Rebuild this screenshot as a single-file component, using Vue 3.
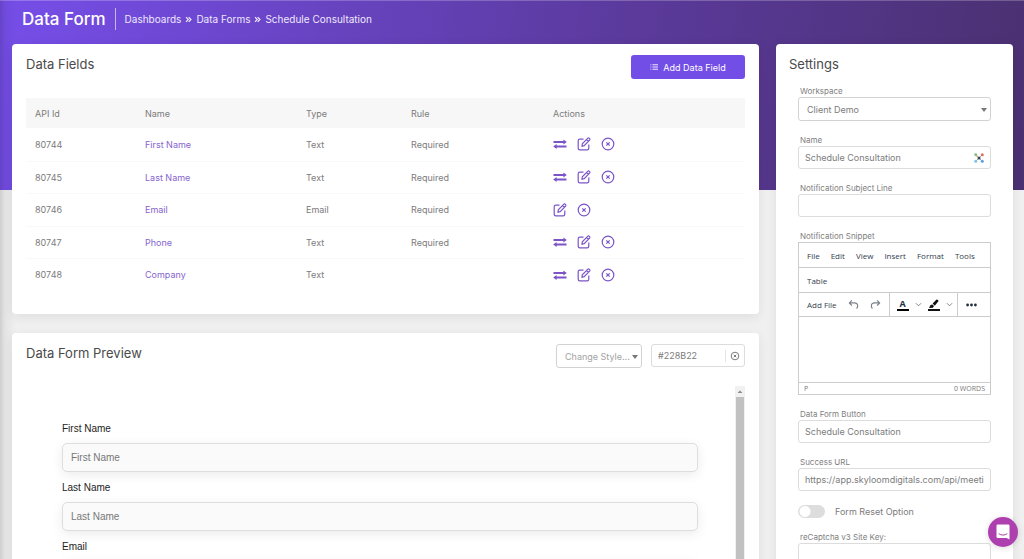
<script setup>
import { ref } from 'vue'

const crumbs = ['Dashboards', 'Data Forms', 'Schedule Consultation']

const fields = [
  { id: 80744, name: 'First Name', type: 'Text', rule: 'Required', movable: true },
  { id: 80745, name: 'Last Name', type: 'Text', rule: 'Required', movable: true },
  { id: 80746, name: 'Email', type: 'Email', rule: 'Required', movable: false },
  { id: 80747, name: 'Phone', type: 'Text', rule: 'Required', movable: true },
  { id: 80748, name: 'Company', type: 'Text', rule: '', movable: true }
]

const previewFields = ['First Name', 'Last Name', 'Email']
const menus = ['File', 'Edit', 'View', 'Insert', 'Format', 'Tools']

const color = ref('#228B22')
const formName = ref('Schedule Consultation')
const subject = ref('')
const buttonText = ref('Schedule Consultation')
const successUrl = ref('https://app.skyloomdigitals.com/api/meetings')
const snippet = ref('')
const resetOption = ref(false)
const siteKey = ref('')
</script>

<template>
  <div class="page">
    <header class="top">
      <h1>Data Form</h1>
      <nav class="crumbs" aria-label="Breadcrumb">
        <template v-for="(c, i) in crumbs" :key="c">
          <svg v-if="i" class="sep" viewBox="0 0 8 8" aria-hidden="true">
            <path d="M1.2 1.2 3.8 4 1.2 6.8M4.2 1.2 6.8 4 4.2 6.8" />
          </svg>
          <a href="#">{{ c }}</a>
        </template>
      </nav>
    </header>

    <div class="columns">
      <main class="left">
        <section class="card fields-card">
          <div class="card-head">
            <h2>Data Fields</h2>
            <button class="add" type="button">
              <svg viewBox="0 0 9 8" aria-hidden="true">
                <path d="M0.5 1.5h1M0.5 4h1M0.5 6.5h1M2.8 1.5H9M2.8 4H9M2.8 6.5H9" />
              </svg>
              Add Data Field
            </button>
          </div>
          <table>
            <colgroup>
              <col class="c-id" /><col class="c-name" /><col class="c-type" /><col class="c-rule" /><col />
            </colgroup>
            <thead>
              <tr><th>API Id</th><th>Name</th><th>Type</th><th>Rule</th><th>Actions</th></tr>
            </thead>
            <tbody>
              <tr v-for="f in fields" :key="f.id">
                <td>{{ f.id }}</td>
                <td><a href="#">{{ f.name }}</a></td>
                <td>{{ f.type }}</td>
                <td>{{ f.rule }}</td>
                <td>
                  <div class="actions">
                    <button v-if="f.movable" type="button" aria-label="Move">
                      <svg viewBox="0 0 14 14">
                        <path class="thick" d="M.5 5H11M3 9.500H13.500" />
                        <path class="solid" d="M10.400 2.500 13.800 5 10.400 7.500zM3.600 7 .2 9.500 3.600 12z" />
                      </svg>
                    </button>
                    <button type="button" aria-label="Edit">
                      <svg viewBox="0 0 14 14">
                        <path d="M6.500 2.200H2.800Q1.200 2.200 1.200 3.800v7.400q0 1.600 1.600 1.600h7.400q1.600 0 1.600-1.600V7.600" />
                        <path d="M5 9.200 5.300 6.800 10.900 1.200Q11.600.6 12.400 1.400q.9.9.2 1.700L7.200 8.700zM9.600 2.600l1.800 1.800" />
                      </svg>
                    </button>
                    <button type="button" aria-label="Delete">
                      <svg viewBox="0 0 14 14">
                        <circle cx="7" cy="7" r="5.800" />
                        <path class="mid" d="M5.300 5.300l3.400 3.400M8.700 5.300 5.300 8.700" />
                      </svg>
                    </button>
                  </div>
                </td>
              </tr>
            </tbody>
          </table>
        </section>

        <section class="card preview-card">
          <div class="card-head">
            <h2>Data Form Preview</h2>
            <div class="tools">
              <div class="select style-select">
                <select aria-label="Change Style"><option>Change Style...</option></select>
              </div>
              <div class="color">
                <input v-model="color" type="text" aria-label="Color" />
                <button type="button" aria-label="Clear color">
                  <svg viewBox="0 0 10 10">
                    <circle cx="5" cy="5" r="3.800" />
                    <path d="M3.800 3.800l2.400 2.400M6.200 3.800 3.800 6.200" />
                  </svg>
                </button>
              </div>
            </div>
          </div>
          <div class="frame">
            <form class="preview" @submit.prevent>
              <div v-for="(p, i) in previewFields" :key="p" class="pfield">
                <label :for="'p' + i">{{ p }}</label>
                <input :id="'p' + i" type="text" :placeholder="p" />
              </div>
            </form>
            <div class="scroll" aria-hidden="true">
              <svg viewBox="0 0 10 11"><path d="M5 4.500 7.400 7H2.600z" /></svg>
              <div class="thumb"></div>
            </div>
          </div>
        </section>
      </main>

      <aside class="card settings">
        <h2>Settings</h2>
        <div class="form">
          <div class="field">
            <label for="ws">Workspace</label>
            <div class="select">
              <select id="ws"><option>Client Demo</option></select>
            </div>
          </div>
          <div class="field">
            <label for="nm">Name</label>
            <div class="box">
              <input id="nm" v-model="formName" type="text" />
              <svg class="burst" viewBox="0 0 10 10" aria-hidden="true">
                <path class="rays" d="M2 2l6 6M8 2 2 8" />
                <circle cx="1.700" cy="1.700" r="1.400" fill="#7fb98a" />
                <circle cx="8.300" cy="1.700" r="1.500" fill="#e2705c" />
                <circle cx="1.700" cy="8.300" r="1.500" fill="#7cc4e8" />
                <circle cx="8.300" cy="8.300" r="1.500" fill="#5e9fd8" />
                <circle cx="5" cy="5" r="1.500" fill="#35445c" />
                <circle cx="3.200" cy="3.400" r=".8" fill="#e6a84c" />
              </svg>
            </div>
          </div>
          <div class="field">
            <label for="sb">Notification Subject Line</label>
            <div class="box"><input id="sb" v-model="subject" type="text" /></div>
          </div>
          <div class="field">
            <label for="sn">Notification Snippet</label>
            <div class="editor">
              <div class="menu">
                <button v-for="m in menus" :key="m" type="button">{{ m }}</button>
              </div>
              <div class="menu"><button type="button">Table</button></div>
              <div class="toolbar">
                <div class="group files">
                  <button type="button">Add File</button>
                  <button type="button" aria-label="Undo">
                    <svg class="arrow" viewBox="0 0 12 12"><path d="M4.200 1.500 1.500 4.300 4.200 7.100M1.700 4.300h5.200q3.600 0 3.600 3.200 0 1.800-1.200 2.900" /></svg>
                  </button>
                  <button type="button" aria-label="Redo">
                    <svg class="arrow" viewBox="0 0 12 12"><path d="M7.800 1.500 10.500 4.300 7.800 7.100M10.300 4.300H5.100q-3.600 0-3.600 3.200 0 1.800 1.200 2.900" /></svg>
                  </button>
                </div>
                <div class="group colors">
                  <button type="button" class="letter" aria-label="Text color">A</button>
                  <button type="button" aria-label="Text colors">
                    <svg class="chev" viewBox="0 0 8 8"><path d="M1 2.500 4 5.500 7 2.500" /></svg>
                  </button>
                  <button type="button" aria-label="Highlight color">
                    <svg class="marker" viewBox="0 0 12 12">
                      <path d="M0 10h12v2H0zM1 9l1.500-3 2-.6L5.900 7 5 8.800zM4.600 4.600 8.300.8Q9 .2 9.900.9q1 .9.3 1.700L6.800 6.700z" />
                    </svg>
                  </button>
                  <button type="button" aria-label="Highlight colors">
                    <svg class="chev" viewBox="0 0 8 8"><path d="M1 2.500 4 5.500 7 2.500" /></svg>
                  </button>
                </div>
                <div class="group more">
                  <button type="button" aria-label="More">
                    <svg class="dots" viewBox="0 0 11 4"><circle cx="1.600" cy="2" r="1.400" /><circle cx="5.500" cy="2" r="1.400" /><circle cx="9.400" cy="2" r="1.400" /></svg>
                  </button>
                </div>
              </div>
              <textarea id="sn" v-model="snippet"></textarea>
              <div class="status"><span>P</span><span>0 WORDS</span></div>
            </div>
          </div>
          <div class="field">
            <label for="bt">Data Form Button</label>
            <div class="box"><input id="bt" v-model="buttonText" type="text" /></div>
          </div>
          <div class="field">
            <label for="su">Success URL</label>
            <div class="box"><input id="su" v-model="successUrl" type="text" /></div>
          </div>
          <label class="switch">
            <input v-model="resetOption" type="checkbox" />
            <span>Form Reset Option</span>
          </label>
          <div class="field">
            <label for="sk">reCaptcha v3 Site Key:</label>
            <div class="box"><input id="sk" v-model="siteKey" type="text" /></div>
          </div>
        </div>
      </aside>
    </div>

    <button class="chat" type="button" aria-label="Open chat">
      <svg viewBox="0 0 14 16">
        <path class="bubble" d="M1.800.5h10.400q1.300 0 1.300 1.300v13.700L10.600 14H1.800Q.5 14 .5 12.700V1.800Q.5.5 1.800.5z" />
        <path class="smile" d="M3 9.800q4 2.800 8 0" />
      </svg>
    </button>
  </div>
</template>

<style>
body {
  background: #f0f0f0;
}
</style>

<style scoped>
* {
  box-sizing: border-box;
}

.page {
  position: relative;
  height: 100vh;
  overflow: hidden;
  padding: 0 11px 0 12px;
  font-family: Inter, "Open Sans", sans-serif;
  font-size: 9px;
  color: #7c7c7c;
  background:
    linear-gradient(rgba(255, 255, 255, 0.22), rgba(255, 255, 255, 0.22)) 0 0 / 100% 1px no-repeat,
    linear-gradient(90deg, rgba(0, 0, 0, 0.14), rgba(0, 0, 0, 0.05) 5px, transparent 16px),
    linear-gradient(100deg, #764ee9 0%, #5b3a9c 60%, #4a3070 100%) 0 0 / 100% 190px no-repeat,
    #f0f0f0;
}

h1,
h2 {
  margin: 0;
  font-weight: 500;
}

button,
input,
select,
textarea {
  font: inherit;
  color: inherit;
  margin: 0;
  padding: 0;
  border: 0;
  background: none;
  outline: none;
}

button {
  cursor: pointer;
}

a {
  color: inherit;
  text-decoration: none;
}

svg {
  display: block;
  fill: none;
  stroke: currentColor;
}

.top {
  display: flex;
  align-items: center;
  height: 44px;
  padding: 0 10px 6px;
  color: #fff;
}

h1 {
  font-size: 17px;
  line-height: 22px;
  padding-right: 9px;
  border-right: 1px solid rgba(255, 255, 255, 0.6);
}

.crumbs {
  display: flex;
  align-items: center;
  gap: 4px;
  padding-left: 9px;
  font-size: 10px;
  color: #eee8fb;
}

.sep {
  width: 7px;
  height: 7px;
  stroke-width: 1.4;
}

.columns {
  display: flex;
  align-items: flex-start;
  gap: 17px;
}

.left {
  flex: 1;
  min-width: 0;
}

.card {
  background: #fff;
  border-radius: 4px;
  box-shadow: 0 3px 12px rgba(0, 0, 0, 0.08);
}

h2 {
  font-size: 13px;
  line-height: 18px;
  font-weight: 400;
  color: #4a4a4a;
}

.card-head {
  display: flex;
  justify-content: space-between;
  align-items: flex-start;
}

.fields-card {
  padding: 11px 14px 23px;
  margin-bottom: 19px;
}

.add {
  display: flex;
  align-items: center;
  justify-content: center;
  gap: 5px;
  width: 114px;
  height: 24px;
  border-radius: 3px;
  background: #734ee6;
  color: #fff;
}

.add svg {
  width: 8px;
  height: 8px;
}

table {
  width: 100%;
  margin-top: 19px;
  border-collapse: collapse;
  table-layout: fixed;
}

.c-id {
  width: 110px;
}

.c-name {
  width: 161px;
}

.c-type {
  width: 105px;
}

.c-rule {
  width: 142px;
}

th,
td {
  padding: 0 9px;
  text-align: left;
  font-weight: 400;
}

th {
  height: 30px;
  background: #f7f7f7;
}

td {
  height: 33px;
  border-bottom: 1px solid #f9f9f9;
}

tr:nth-child(even) td {
  height: 32px;
}

tr:last-child td {
  border-bottom: 0;
}

td a {
  color: #8665cf;
}

.actions {
  display: flex;
  gap: 10px;
  color: #7b55c7;
}

.actions svg {
  width: 14px;
  height: 14px;
  stroke-width: 1.2;
}

.actions .thick {
  stroke-width: 2;
}

.solid {
  fill: currentColor;
  stroke: none;
}

.preview-card {
  padding: 11px 14px 0;
}

.tools {
  display: flex;
  gap: 9px;
}

.select {
  position: relative;
}

.select select {
  appearance: none;
  display: block;
  width: 100%;
  height: 24px;
  padding: 0 10px 0 8px;
  border: 1px solid #d2d2d2;
  border-radius: 3px;
}

.select::after {
  content: "";
  position: absolute;
  right: 4px;
  top: 11px;
  border: 3px solid transparent;
  border-top: 4px solid #777;
  border-bottom: 0;
  pointer-events: none;
}

.style-select {
  width: 86px;
  color: #a3a3a3;
}

.color {
  display: flex;
  align-items: center;
  width: 94px;
  height: 23px;
  border: 1px solid #dcdcdc;
  border-radius: 3px;
}

.color input {
  flex: 1;
  min-width: 0;
  padding-left: 6px;
}

.color button {
  padding: 0 4px;
  border-left: 1px solid #e3e3e3;
}

.color svg {
  width: 10px;
  height: 12px;
}

.frame {
  display: flex;
  height: 320px;
  margin-top: 18px;
}

.preview {
  flex: 1;
  padding: 36px 37px 0 36px;
  font-family: "Liberation Sans", Arial, sans-serif;
  font-size: 10px;
}

.pfield {
  margin-bottom: 9px;
}

.pfield label {
  display: block;
  line-height: 14px;
  margin-bottom: 7px;
  color: #222;
}

.pfield input {
  display: block;
  width: 100%;
  height: 29px;
  padding: 0 8px;
  border: 1px solid #dedede;
  border-radius: 5px;
  background: #fafafa;
  box-shadow: 0 3px 12px rgba(0, 0, 0, 0.08);
}

.pfield input::placeholder {
  color: #777;
  opacity: 1;
}

.scroll {
  width: 10px;
  background: #f1f1f1;
}

.scroll svg {
  width: 10px;
  height: 11px;
  fill: #888;
  stroke: none;
}

.thumb {
  height: 240px;
  margin: 0 1px;
  background: #c1c1c1;
}

.settings {
  width: 237px;
  padding: 11px 22px 20px;
}

.settings h2 {
  margin-left: -9px;
}

.form {
  padding-top: 13px;
}

.field {
  margin-bottom: 14px;
}

.field > label {
  display: block;
  padding-left: 2px;
  font-size: 8px;
  line-height: 11px;
  color: #808080;
}

.box {
  display: flex;
  align-items: center;
  height: 23px;
  padding: 0 6px;
  border: 1px solid #dcdcdc;
  border-radius: 3px;
}

.box input {
  flex: 1;
  min-width: 0;
}

.burst {
  width: 10px;
  height: 10px;
  stroke: none;
}

.rays {
  stroke: #9aa7b8;
}

.editor {
  border: 1px solid #ccc;
  font-family: "Open Sans", "Noto Sans", sans-serif;
  font-size: 8px;
  color: #333d4d;
}

.menu {
  display: flex;
  gap: 11px;
  height: 25px;
  padding: 0 8px;
  border-bottom: 1px solid #ccc;
}

.toolbar {
  display: flex;
  height: 24px;
  border-bottom: 1px solid #ccc;
}

.group {
  display: flex;
  align-items: center;
}

.group + .group {
  border-left: 1px solid #ccc;
}

.files {
  gap: 11px;
  padding: 0 8px;
}

.arrow {
  width: 11px;
  height: 11px;
  color: #7d828a;
  stroke-width: 1.3;
}

.colors {
  gap: 6px;
  padding: 0 4px 0 7px;
}

.letter {
  width: 12px;
  line-height: 10px;
  font-weight: 700;
  font-size: 9px;
  color: #222f3e;
  border-bottom: 2px solid #000;
}

.chev {
  width: 7px;
  height: 7px;
  color: #777;
}

.marker {
  width: 12px;
  height: 12px;
  fill: #111;
  stroke: none;
}

.more {
  padding: 0 8px;
}

.dots {
  width: 11px;
  height: 4px;
  fill: #222f3e;
  stroke: none;
}

.editor textarea {
  display: block;
  width: 100%;
  height: 65px;
  resize: none;
}

.status {
  display: flex;
  justify-content: space-between;
  padding: 0 5px;
  border-top: 1px solid #ccc;
  font-size: 7px;
  line-height: 11px;
  color: #777;
}

.switch {
  display: flex;
  align-items: center;
  gap: 10px;
  height: 13px;
  margin-bottom: 14px;
}

.switch input {
  appearance: none;
  width: 27px;
  height: 13px;
  border-radius: 7px;
  background: radial-gradient(circle at 7px 50%, #fff 5px, transparent 6px), #ddd;
}

.switch input:checked {
  background: radial-gradient(circle at 20px 50%, #fff 5px, transparent 6px), #734ee6;
}

.chat {
  position: fixed;
  right: 6px;
  bottom: 12px;
  display: flex;
  align-items: center;
  justify-content: center;
  width: 30px;
  height: 30px;
  border-radius: 50%;
  background: #ae3fae;
  box-shadow: 0 1px 6px rgba(0, 0, 0, 0.15);
}

.chat svg {
  width: 14px;
  height: 16px;
}

.bubble {
  fill: #fff;
  stroke: none;
}

.smile {
  stroke: #ae3fae;
  stroke-linecap: round;
}
</style>
